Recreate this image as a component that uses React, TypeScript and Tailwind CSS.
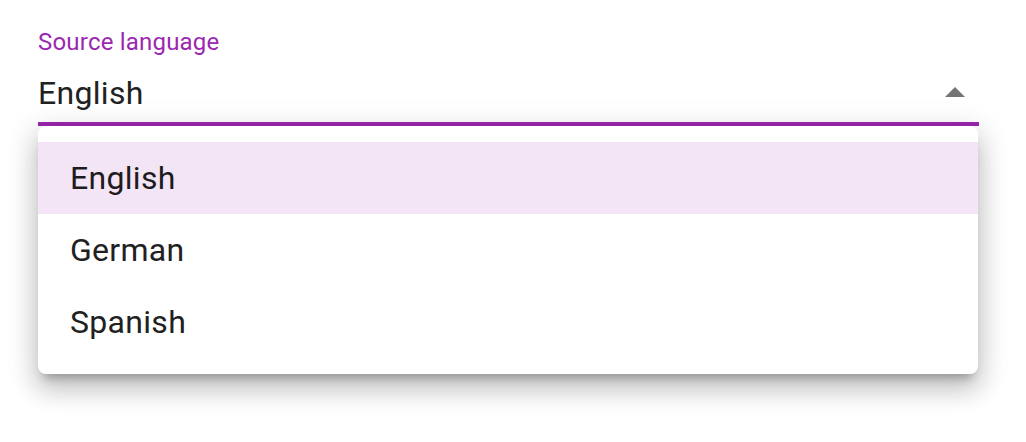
import React from "react";

export default function App() {
  const items = ["English", "German", "Spanish"];
  return (
    <div
      className="w-[1026px] h-[442px] bg-white overflow-hidden"
      style={{ fontFamily: "Roboto, 'Liberation Sans', sans-serif" }}
    >
      <div className="pl-[38px] pt-[30px] w-[978px]">
        <div className="text-[24px] leading-[24px] tracking-[0.2px] text-[#9c27b0]">Source language</div>
        <div className="mt-[23px] flex items-center justify-between pr-[13px]">
          <span className="text-[32px] leading-[32px] tracking-[0.3px] text-[#212121]">English</span>
          <svg width="20" height="10" viewBox="0 0 20 10" className="mt-[-2px]">
            <path d="M0 10 L10 0 L20 10 Z" fill="#757575" />
          </svg>
        </div>
        <div className="mt-[13px] h-[4px] w-[941px] bg-[#9c27b0]" />
        <div className="w-[940px] rounded-[8px] bg-white py-[16px] shadow-[0_10px_10px_-6px_rgba(0,0,0,0.25),0_16px_24px_2px_rgba(0,0,0,0.14),0_6px_30px_5px_rgba(0,0,0,0.12)]">
          {items.map((it, i) => (
            <div
              key={it}
              className={
                "h-[72px] pl-[32px] flex items-center text-[32px] leading-[32px] tracking-[0.3px] " +
                (i === 0 ? "bg-[#f3e5f5] text-[#1d1b20]" : "text-[#212121]")
              }
            >
              {it}
            </div>
          ))}
        </div>
      </div>
    </div>
  );
}
